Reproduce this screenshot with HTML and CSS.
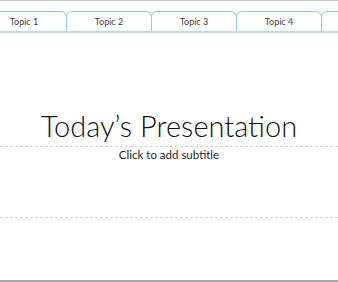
FILE: index.html
```html
<!DOCTYPE html>
<html lang="en">
<head>
    <meta charset="UTF-8">
    <meta name="viewport" content="width=device-width, initial-scale=1.0">
    <title>Today's Presentation</title>
    <link rel="stylesheet" href="styles.css">
</head>
<body>
    <div class="slide">
        <nav class="tabs">
            <div class="tab">Topic 1</div>
            <div class="tab">Topic 2</div>
            <div class="tab">Topic 3</div>
            <div class="tab">Topic 4</div>
            <div class="tab"></div>
        </nav>
        <div class="title-box">
            <h1>Today’s Presentation</h1>
        </div>
        <div class="subtitle-box">
            <p>Click to add subtitle</p>
        </div>
    </div>
</body>
</html>
```

FILE: styles.css
```css
body {
    margin: 0;
    padding: 0;
    background: #ffffff;
    font-family: 'Lato', 'Liberation Sans', sans-serif;
    overflow: hidden;
}
.slide {
    width: 338px;
    height: 282px;
    border-top: 1px solid #c3c3c3;
    border-bottom: 2px solid #a9a9a9;
    box-sizing: border-box;
    overflow: hidden;
}
.tabs {
    display: flex;
    margin-top: 10px;
    margin-left: -19px;
    border-bottom: 2px solid #bdd7ee;
}
.tab {
    flex: 0 0 86px;
    height: 20px;
    margin-right: -1px;
    border: 1px solid #9dc3e6;
    border-bottom: none;
    border-radius: 6px 6px 0 0;
    box-sizing: border-box;
    text-align: center;
    font-size: 9px;
    line-height: 20px;
    color: #404040;
}
.title-box {
    height: 113px;
    border-bottom: 1px dashed #d4d4d4;
    display: flex;
    align-items: flex-end;
    justify-content: center;
}
h1 {
    margin: 0 0 3px;
    font-weight: 300;
    font-size: 29px;
    color: #111111;
}
.subtitle-box {
    height: 69px;
    border-bottom: 1px dashed #d4d4d4;
    text-align: center;
}
.subtitle-box p {
    margin: 1px 0 0;
    font-size: 11.5px;
    color: #262626;
}
```
